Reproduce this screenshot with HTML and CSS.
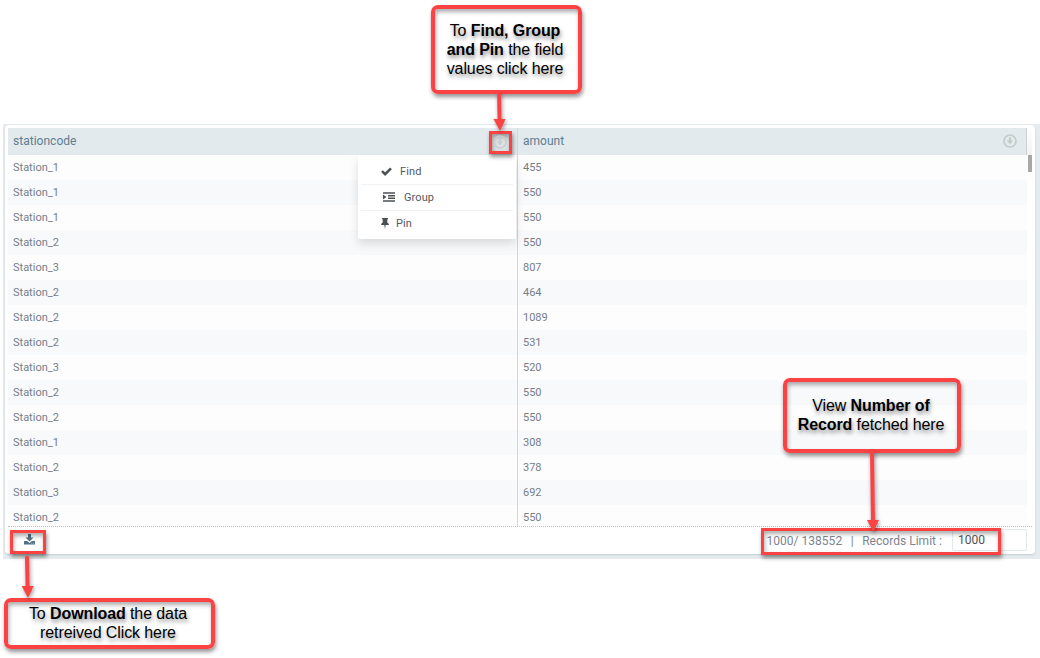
FILE: index.html
```html
<!DOCTYPE html>
<html lang="en">
<head>
<meta charset="utf-8">
<title>Station records</title>
<link rel="stylesheet" href="styles.css">
</head>
<body>
<main class="stage">
  <div class="backdrop">
    <section class="card">
      <div class="grid-area">
        <div class="grid">
          <div class="row head">
            <div class="cell">stationcode</div>
            <div class="cell">amount
              <svg class="circle-icon" viewBox="0 0 14 14"><circle cx="7" cy="7" r="6" fill="none" stroke="#c6cacb" stroke-width="1.7"/><path d="M5.9 3.5h2.2v3h2.2L7 10.2 3.7 6.5h2.2z" fill="#c6cacb"/></svg>
            </div>
          </div>
          <div class="row"><div class="cell">Station_1</div><div class="cell">455</div></div>
          <div class="row"><div class="cell">Station_1</div><div class="cell">550</div></div>
          <div class="row"><div class="cell">Station_1</div><div class="cell">550</div></div>
          <div class="row"><div class="cell">Station_2</div><div class="cell">550</div></div>
          <div class="row"><div class="cell">Station_3</div><div class="cell">807</div></div>
          <div class="row"><div class="cell">Station_2</div><div class="cell">464</div></div>
          <div class="row"><div class="cell">Station_2</div><div class="cell">1089</div></div>
          <div class="row"><div class="cell">Station_2</div><div class="cell">531</div></div>
          <div class="row"><div class="cell">Station_3</div><div class="cell">520</div></div>
          <div class="row"><div class="cell">Station_2</div><div class="cell">550</div></div>
          <div class="row"><div class="cell">Station_2</div><div class="cell">550</div></div>
          <div class="row"><div class="cell">Station_1</div><div class="cell">308</div></div>
          <div class="row"><div class="cell">Station_2</div><div class="cell">378</div></div>
          <div class="row"><div class="cell">Station_3</div><div class="cell">692</div></div>
          <div class="row"><div class="cell">Station_2</div><div class="cell">550</div></div>
        </div>
        <div class="scrollbar"><div class="thumb"></div></div>
      </div>
      <footer class="footer">
        <svg class="download" viewBox="0 0 11 11"><path d="M4 0h3v3.5h2.5L5.5 7.4 1.5 3.5H4z"/><path d="M0 7.1h3.2l2.3 1.8 2.3-1.8H11V10.6H0z"/><path d="M7.4 9.2h.8m.8 0h.8" stroke="#fff" stroke-width=".7"/></svg>
        <div class="counts"><span>1000/ 138552</span><span class="bar">|</span><span>Records Limit :</span></div>
        <div class="limit">1000</div>
      </footer>
    </section>
  </div>

  <div class="menu">
    <div class="item"><svg class="ico check" viewBox="0 0 11 9"><path d="M1 4.2l3.1 3L10 1.3" fill="none" stroke="#4c5055" stroke-width="2.5"/></svg>Find</div>
    <div class="item group"><svg class="ico indent" viewBox="0 0 12 10"><path d="M0 1h12M5 3.7h7M5 6.300h7M0 9h12" stroke="#4c5055" stroke-width="1.6"/><path d="M0 2.600L3.400 5 0 7.400z" fill="#4c5055"/></svg>Group</div>
    <div class="item"><svg class="ico pin" viewBox="0 0 8 11"><path d="M1 0h6v1.300H6.300v3.200Q7.900 5.300 8 7H4.700L4 11l-.7-4H0q.1-1.700 1.700-2.500V1.300H1z" fill="#4c5055"/></svg>Pin</div>
  </div>

  <div class="mark mark-head"><svg class="circle-icon" viewBox="0 0 14 14"><circle cx="7" cy="7" r="6" fill="none" stroke="#c9cccd" stroke-width="1.7"/><path d="M5.9 3.5h2.2v3h2.2L7 10.2 3.7 6.5h2.2z" fill="#c9cccd"/></svg></div>
  <div class="mark mark-download"></div>
  <div class="mark mark-records"></div>

  <div class="note note-find">To <b>Find, Group<br>and Pin</b> the field<br>values click here</div>
  <div class="note note-records">View <b>Number of<br>Record</b> fetched here</div>
  <div class="note note-download">To <b>Download</b> the data<br>retreived Click here</div>

  <svg class="arrows" viewBox="0 0 1040 658">
    <g stroke="#fc4343" stroke-width="4" fill="none"><path d="M499 92L499.6 121"/><path d="M872 451L873 522"/><path d="M27 557.5L27.6 588" stroke-linecap="round"/></g>
    <g fill="#fc4343"><path d="M493.500 119h12L500 131z"/><path d="M867 520h12l-5.700 12z"/><path d="M21.700 586h12L28 598z"/></g>
  </svg>
</main>
</body>
</html>
```
FILE: styles.css
```css
* { box-sizing: border-box; }
body { margin: 0; background: #fff; font-family: Roboto, sans-serif; }
.stage { position: relative; width: 1040px; height: 658px; padding: 124px 0 0 3px; overflow: hidden; }
.backdrop { height: 435px; padding: 1px 5px 5px 2px; background: #e5ebee; }
.card { height: 429px; padding: 3px 3px 0; border-radius: 4px; background: #fff; box-shadow: 0 1px 2px #c3ced3; }
.grid-area { display: flex; height: 399px; border-bottom: 1px dotted #bcc0c3; overflow: hidden; }
.grid { width: 1019px; height: 402px; flex: none; }
.row { display: grid; grid-template-columns: 510px 509px; height: 25px; background: #fdfdfd; }
.row:nth-child(odd) { background: #f8f9fb; }
.row.head { height: 27px; background: #e2eaed; }
.cell { display: flex; align-items: center; padding: 0 5px; color: #757e8a; font-size: 11px; }
.cell:first-child { border-right: 1px solid #d3d7da; }
.head .cell { justify-content: space-between; padding: 0 9px 1px 5px; color: #5f7d92; font-size: 12px; letter-spacing: .02px; }
.head .cell:last-child { border-right: 1px solid #cbd1d4; }
.circle-icon { width: 14px; height: 14px; }
.scrollbar { width: 5px; padding: 27px 0 0 1px; background: linear-gradient(#fff, #f2f2f2 27px, #fff 27px); }
.thumb { width: 4px; height: 17px; background: #a8a8a8; }
.footer { display: flex; height: 27px; padding: 2px 5px 3px 16px; color: #7c8490; font-size: 12px; }
.download { width: 11px; height: 11px; margin-top: 5px; fill: #526f84; }
.counts { display: flex; margin-left: auto; line-height: 25px; letter-spacing: .03px; white-space: pre; }
.bar { margin: 0 8.5px; }
.limit { width: 75px; height: 22px; margin-left: 10px; padding-left: 5px; border: 1px solid #e3eaed; border-radius: 2px; color: #4d5359; line-height: 20px; }

.menu { position: absolute; left: 358px; top: 155px; width: 158px; height: 84px; padding: 4px 3px; border-radius: 0 0 2px 2px; background: #fff; box-shadow: 0 5px 10px rgba(0,0,0,.12); color: #55595e; font-size: 11px; letter-spacing: .1px; }
.item { display: flex; align-items: center; height: 26px; padding-left: 20px; border-bottom: 1px solid #f0f1f2; }
.item:last-child { height: 25px; border-bottom: 0; }
.item.group { padding-left: 22px; }
.check { width: 11px; height: 9px; margin-right: 8px; }
.indent { width: 12px; height: 10px; margin: -1px 9px 0 0; }
.pin { width: 8px; height: 11px; margin-right: 7px; }

.mark { position: absolute; border: 3px solid #fc4343; box-shadow: 1px 3px 4px rgba(0,0,0,.42), inset 1px 3px 4px rgba(0,0,0,.32); }
.mark-head { left: 489px; top: 131px; width: 23px; height: 23px; padding: 1px; background: #dce3e6; line-height: 0; }
.mark-download { left: 10px; top: 530px; width: 36px; height: 24px; }
.mark-records { left: 761px; top: 528px; width: 240px; height: 27px; }

.note { position: absolute; border: 4px solid #fc4343; border-radius: 7px; box-shadow: 1px 3px 4px rgba(0,0,0,.42), inset 1px 3px 4px rgba(0,0,0,.32); color: #000; font: 16px/19px "Liberation Sans", Arial, sans-serif; letter-spacing: -.1px; text-align: center; text-shadow: 1px 3px 4px rgba(0,0,0,.45); white-space: nowrap; }
.note-find { left: 431px; top: 5px; width: 151px; height: 89px; padding: 12px 3px 0 0; }
.note-records { left: 783px; top: 378px; width: 178px; height: 75px; padding: 14px 2px 0 0; }
.note-download { left: 4px; top: 598px; width: 211px; height: 51px; padding: 2px 3px 0 0; }
.arrows { position: absolute; left: 0; top: 0; width: 1040px; height: 658px; filter: drop-shadow(1px 2px 2px rgba(0,0,0,.4)); pointer-events: none; }
```
